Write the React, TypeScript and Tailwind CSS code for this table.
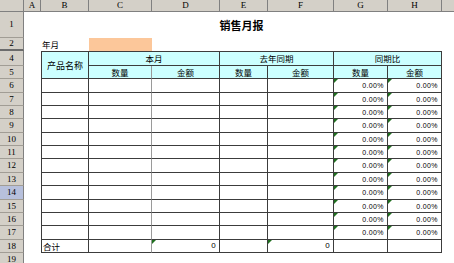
import React from 'react'

const cjk = "font-['Noto_Sans_CJK_SC','Noto_Sans',sans-serif]"
const serif = "font-['Liberation_Serif',serif]"
const num = "font-['Liberation_Sans',sans-serif] tracking-[0.4px]"

const cols = ['A', 'B', 'C', 'D', 'E', 'F', 'G', 'H']

function RowHead({ n, active, thick }: { n: string; active?: boolean; thick?: boolean }) {
  return (
    <div
      className={`flex items-center justify-center border-r border-[#808080] text-[9px] leading-none text-black ${serif} ${
        active ? 'bg-[#b7c0dc]' : 'bg-[#d4d0c8]'
      } ${thick ? 'border-b-2 border-b-[#6b6b6b]' : 'border-b border-b-[#a19d95]'}`}
    >
      {n}
    </div>
  )
}

function Blank() {
  return <div />
}

function Flag() {
  return <span className="absolute left-0 top-0 h-[4px] w-[4px] bg-[#1f6f1f] [clip-path:polygon(0_0,100%_0,0_100%)]" />
}

function Cell({
  children,
  left,
  top,
  head,
  flag,
  align = 'center',
  span = '',
  light,
}: {
  children?: React.ReactNode
  left?: boolean
  top?: boolean
  head?: boolean
  flag?: boolean
  align?: 'center' | 'left' | 'right'
  span?: string
  light?: boolean
}) {
  const justify = align === 'center' ? 'justify-center' : align === 'left' ? 'justify-start pl-[1px]' : 'justify-end pr-[3px]'
  return (
    <div
      className={`relative flex items-center ${justify} border-b border-r border-[#3c3c3c] ${light ? 'border-r-[#9a9a9a]' : ''} ${
        left ? 'border-l' : ''
      } ${top ? 'border-t' : ''} ${head ? 'bg-[#ccffff]' : 'bg-white'} ${span} text-black leading-none`}
    >
      {flag && <Flag />}
      {children}
    </div>
  )
}

const bodyRows = ['6', '7', '8', '9', '10', '11', '12', '13', '14', '15', '16', '17']

export default function App() {
  return (
    <div className="h-[263px] w-[454px] overflow-hidden bg-white">
      <div className="grid grid-cols-[24px_17px_48px_63px_68px_48px_66px_54px_54px_1fr] grid-rows-[12px_26px_13px_15px_13px_14px_13px_13px_14px_13px_13px_14px_13px_14px_13px_13px_14px_13px_13px]">
        {/* column headers */}
        <div className="border-b border-r border-[#808080] bg-[#d4d0c8]" />
        {cols.map((c) => (
          <div
            key={c}
            className={`flex items-center justify-center border-b border-r border-[#808080] bg-[#d4d0c8] text-[9px] leading-none text-black ${serif}`}
          >
            {c}
          </div>
        ))}
        <div className="border-b border-[#808080] bg-[#d4d0c8]" />

        {/* row 1: title */}
        <RowHead n="1" />
        <Blank />
        <div className={`col-span-7 flex items-center justify-center pt-[1px] text-[11px] font-bold text-black ${cjk}`}>销售月报</div>
        <Blank />

        {/* row 2 */}
        <RowHead n="2" thick />
        <Blank />
        <div className={`flex items-center pl-[1px] text-[8.5px] leading-none text-black ${cjk}`}>年月</div>
        <div className="bg-[#fcc79a]" />
        <Blank />
        <Blank />
        <Blank />
        <Blank />
        <Blank />
        <Blank />

        {/* row 4 */}
        <RowHead n="4" />
        <Blank />
        <Cell left top head span={`row-span-2 text-[9px] ${cjk}`}>产品名称</Cell>
        <Cell top head span={`col-span-2 text-[8.5px] ${cjk}`}>本月</Cell>
        <Cell top head span={`col-span-2 text-[8.5px] ${cjk}`}>去年同期</Cell>
        <Cell top head span={`col-span-2 text-[8.5px] ${cjk}`}>同期比</Cell>
        <Blank />

        {/* row 5 */}
        <RowHead n="5" />
        <Blank />
        <Cell head light span={`text-[8.5px] ${cjk}`}>数量</Cell>
        <Cell head span={`text-[8.5px] ${cjk}`}>金额</Cell>
        <Cell head span={`text-[8.5px] ${cjk}`}>数量</Cell>
        <Cell head span={`text-[8.5px] ${cjk}`}>金额</Cell>
        <Cell head span={`text-[8.5px] ${cjk}`}>数量</Cell>
        <Cell head span={`text-[8.5px] ${cjk}`}>金额</Cell>
        <Blank />

        {/* rows 6-17 */}
        {bodyRows.map((n) => (
          <React.Fragment key={n}>
            <RowHead n={n} active={n === '14'} />
            <Blank />
            <Cell left />
            <Cell light />
            <Cell />
            <Cell />
            <Cell />
            <Cell flag align="right" span={`text-[7px] ${num}`}>
              0.00%
            </Cell>
            <Cell flag align="right" span={`text-[7px] ${num}`}>
              0.00%
            </Cell>
            <Blank />
          </React.Fragment>
        ))}

        {/* row 18: totals */}
        <RowHead n="18" />
        <Blank />
        <Cell left align="left" span={`text-[8.5px] ${cjk}`}>合计</Cell>
        <Cell light />
        <Cell flag align="right" span={`text-[8px] ${num}`}>
          0
        </Cell>
        <Cell />
        <Cell flag align="right" span={`text-[8px] ${num}`}>
          0
        </Cell>
        <Cell />
        <Cell />
        <Blank />

        {/* row 19 */}
        <RowHead n="19" />
      </div>
    </div>
  )
}
